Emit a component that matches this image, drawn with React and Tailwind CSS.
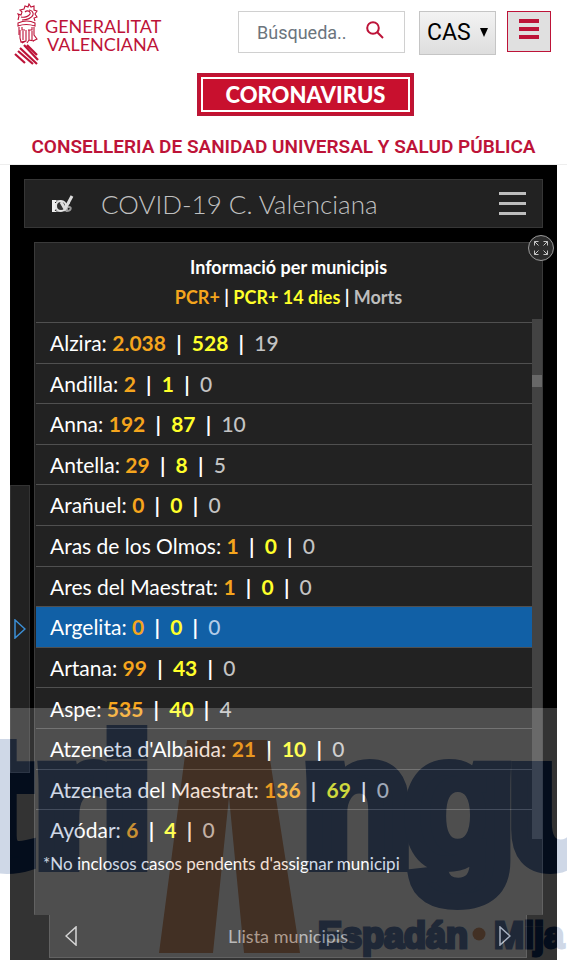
import React from "react";

const towns = [
  ["Alzira", "2.038", "528", "19"],
  ["Andilla", "2", "1", "0"],
  ["Anna", "192", "87", "10"],
  ["Antella", "29", "8", "5"],
  ["Arañuel", "0", "0", "0"],
  ["Aras de los Olmos", "1", "0", "0"],
  ["Ares del Maestrat", "1", "0", "0"],
  ["Argelita", "0", "0", "0"],
  ["Artana", "99", "43", "0"],
  ["Aspe", "535", "40", "4"],
  ["Atzeneta d'Albaida", "21", "10", "0"],
  ["Atzeneta del Maestrat", "136", "69", "0"],
  ["Ayódar", "6", "4", "0"],
];

function Crest() {
  return (
    <svg viewBox="0 0 26 62" className="h-[62px] w-[26px]" fill="none" stroke="#bd1338" aria-hidden="true">
      <g strokeWidth="1.1">
        <path d="M4 17l1-4-1-2 3 1 1-3-2-2 4-1 1-3 3 1 1-3 2 3 3-1 0 4 3 1-2 3 2 3-3 1 1 3" />
        <path d="M7 14c4 1 8-1 9-3 1-3-3-4-5-2M8 17c5 0 10-2 11-5s-2-5-4-5" />
        <path d="M4 20q9-4 17 0v3q-9-3-17 0zM5 24v8M20 24v8l3 4-4 2M8 24v3h3M14 27h4v-3" />
        <path d="M6 27v8l1 4 5-1V27M9 28v9M15 27v10l5 1M18 28v9M12 38l-4 2M15 37l-2 3" />
      </g>
      <g strokeWidth="2.200">
        <path d="M13 42l10 10M10 42l14 15M6 45l17 16M4 48l15 13M1 51l10 9" />
      </g>
    </svg>
  );
}

function Header() {
  return (
    <header className="border-b border-[#eeeeee] bg-white font-[Roboto,sans-serif]">
      <div className="flex h-[66px] items-start pr-4">
        <a href="#" className="flex pt-[3px] pl-3.5 text-[#bd1338]">
          <Crest />
          <span className="pt-3.5 pl-[5px] font-[Lato,sans-serif] text-[18px] leading-[18px]">
            GENERALITAT
            <span className="block pl-0.5">VALENCIANA</span>
          </span>
        </a>
        <div className="mt-[11px] ml-auto flex h-[42px] w-[167px] items-center border border-[#d0d0d0] px-[18px]">
          <input aria-label="Búsqueda" placeholder="Búsqueda.." className="min-w-0 flex-1 text-[18px] outline-none placeholder:text-[#6c757d]" />
          <button aria-label="Buscar" className="mr-0.5 -mt-1">
            <svg viewBox="0 0 18 18" className="size-[18px]" fill="none" stroke="#bd1338" strokeWidth="2">
              <circle cx="7" cy="7" r="5.8" />
              <path d="M11.3 11.3L17 17" />
            </svg>
          </button>
        </div>
        <div className="relative mt-[11px] ml-3.5 h-11 w-[77px]">
          <select aria-label="Idioma" className="h-full w-full appearance-none border border-[#c5c5c5] bg-linear-to-b from-[#f3f3f3] to-[#dedede] pl-[7px] text-[23px] text-black">
            <option>CAS</option>
          </select>
          <svg viewBox="0 0 8 9" className="pointer-events-none absolute top-[17px] right-2 h-[9px] w-2" aria-hidden="true">
            <path d="M0 0h8L4 9z" />
          </svg>
        </div>
        <button aria-label="Menú" className="mt-[11px] ml-[11px] flex h-[41px] w-[44px] flex-col items-center gap-1 border border-[#bd1338] bg-[#e0e0e0] pt-[7px]">
          <span className="h-1 w-5 bg-[#bd1338]" />
          <span className="h-1 w-5 bg-[#bd1338]" />
          <span className="h-1 w-5 bg-[#bd1338]" />
        </button>
      </div>
      <div className="flex justify-center pt-[7px] pl-11">
        <a href="#" className="w-[217px] border-2 border-[#ba1636] bg-[#c8102e] p-0.5">
          <span className="block h-[35px] border-2 border-white text-center font-[Lato,sans-serif] text-[22px] leading-[31px] font-black text-white">
            CORONAVIRUS
          </span>
        </a>
      </div>
      <h1 className="pt-5 pb-1.5 text-center text-[19px] leading-[22px] font-semibold whitespace-nowrap text-[#bd1338]">
        CONSELLERIA DE SANIDAD UNIVERSAL Y SALUD PÚBLICA
      </h1>
    </header>
  );
}

function Row({ town, selected }) {
  const [name, pcr, recent, deaths] = town;
  return (
    <li className={`flex flex-1 border-t border-[#505050] ${selected ? "bg-[#1160a6]" : ""}`}>
      <button className="flex-1 pl-3.5 text-left whitespace-pre">
        {name}: <b className="text-[#f5a51d]">{pcr}</b>
        <b>{"  |  "}</b>
        <b className="text-[#ffff2a]">{recent}</b>
        <b>{"  |  "}</b>
        <span className={selected ? "font-medium text-[#b4cce8]" : "font-medium text-[#c4c4c4]"}>{deaths}</span>
      </button>
    </li>
  );
}

function Watermark() {
  return (
    <div className="pointer-events-none absolute inset-x-0 top-[708px] bottom-0 overflow-hidden bg-white opacity-20" aria-hidden="true">
      <svg viewBox="0 0 700 252" className="h-[252px] w-[700px] max-w-none">
        <g fill="#14418c" stroke="#14418c" strokeWidth="16" fontFamily="Liberation Sans, Arial, sans-serif" fontWeight="700" fontSize="180">
          <text x="-30" y="156">t</text>
          <text x="34" y="156">r</text>
          <text x="102" y="156">i</text>
          <text x="302" y="156">n</text>
          <text x="405" y="156">g</text>
          <text x="508" y="156">u</text>
        </g>
        <path d="M187 32h80l33 213h-56L229 89l-16 156h-54z" fill="#c3692d" />
        <g fill="#14418c" stroke="#14418c" strokeWidth="3" fontFamily="Liberation Sans, Arial, sans-serif" fontWeight="700" fontSize="36">
          <text x="318" y="240">Espadán</text>
          <text x="494" y="240">Mija</text>
        </g>
        <circle cx="479" cy="226" r="6.5" fill="#c3692d" />
      </svg>
    </div>
  );
}

export default function App() {
  return (
    <div className="relative min-h-screen overflow-hidden bg-white">
      <Header />
      <main className="relative mx-2.5 bg-black px-3.5 pt-3.5 pb-[3px] font-[Lato,sans-serif]">
        <div className="flex h-[49px] items-center border border-[#363636] bg-[#222222] pr-4 pl-[26px]">
          <svg viewBox="0 0 24 20" className="h-5 w-6" fill="none" aria-hidden="true">
            <path d="M1 6h4v12H1z" fill="#eeeeee" />
            <path d="M5 6h5v12H5z" fill="#999999" />
            <path d="M4 8l4 4-4 5" stroke="#222" />
            <circle cx="10" cy="12" r="5" stroke="#e5e5e5" strokeWidth="2" fill="#333" />
            <path d="M16 9v9M19 9c-4 0-4 4-1 4s2 4-2 4" stroke="#999" strokeWidth="2" />
            <path d="M10 8l4 7 7-13" stroke="#ddd" strokeWidth="3" />
          </svg>
          <h2 className="ml-[26px] text-[26px] leading-none font-light text-[#c0c0c0]">COVID-19 C. Valenciana</h2>
          <button aria-label="Obrir menú" className="ml-auto flex w-[27px] flex-col gap-[7px]">
            <span className="h-[3px] w-full bg-[#bdbdbd]" />
            <span className="h-[3px] w-full bg-[#bdbdbd]" />
            <span className="h-[3px] w-full bg-[#bdbdbd]" />
          </button>
        </div>

        <section className="relative ml-2.5 mt-3.5 h-[673px] border border-[#3a3a3a] border-b-transparent bg-[#222222] text-white">
          <button aria-label="Ampliar" className="absolute -top-2 -right-3 z-10 flex size-[26px] items-center justify-center rounded-full border border-[#999999] bg-[#2c2c2c]">
            <svg viewBox="0 0 16 16" className="size-4" fill="none" stroke="#c6c6c6" aria-hidden="true">
              <path d="M1.500 5.500v-4h4M1.500 1.500l4 4M10.500 1.500h4v4M14.500 1.500l-4 4M1.500 10.500v4h4M1.500 14.500l4-4M14.500 10.500v4h-4M14.500 14.500l-4-4" />
            </svg>
          </button>
          <div className="h-[76px] pt-[9px] text-center text-[18px] leading-[30px] font-bold">
            <p>Informació per municipis</p>
            <p>
              <span className="text-[#f5a51d]">PCR+</span> | <span className="text-[#ffff2a]">PCR+ 14 dies</span> |{" "}
              <span className="text-[#bdbdbd]">Morts</span>
            </p>
          </div>
          <div className="flex">
            <ul className="mt-[3px] ml-px flex h-[528px] flex-1 flex-col text-[21px]">
              {towns.map((t) => (
                <Row key={t[0]} town={t} selected={t[0] === "Argelita"} />
              ))}
            </ul>
            <div className="h-[520px] w-2.5 bg-[#434343] pt-14">
              <div className="h-3 bg-[#686868]" />
            </div>
          </div>
          <p className="pl-2 text-[17px] leading-7">*No inclosos casos pendents d'assignar municipi</p>
        </section>

        <nav className="mr-4 ml-[25px] flex h-[43px] items-center justify-between border border-t-0 border-[#3a3a3a] bg-[#222222] px-[15px]">
          <button aria-label="Anterior">
            <svg viewBox="0 0 12 20" className="h-5 w-3" fill="none" stroke="#cccccc" strokeWidth="1.500"><path d="M11 1v18L1 10z" /></svg>
          </button>
          <span className="text-[18px] text-[#a8a8a8]">Llista municipis</span>
          <button aria-label="Següent">
            <svg viewBox="0 0 12 20" className="h-5 w-3" fill="none" stroke="#cccccc" strokeWidth="1.500"><path d="M1 1v18l10-9z" /></svg>
          </button>
        </nav>

        <button aria-label="Mostrar panell" className="absolute top-[320px] left-0 h-[288px] w-5 border border-[#333333] bg-[#222222] pl-[3px]">
          <svg viewBox="0 0 12 20" className="h-5 w-3" fill="none" stroke="#3b8fd6" strokeWidth="1.500"><path d="M1 1v18l10-9z" /></svg>
        </button>
      </main>
      <Watermark />
    </div>
  );
}
